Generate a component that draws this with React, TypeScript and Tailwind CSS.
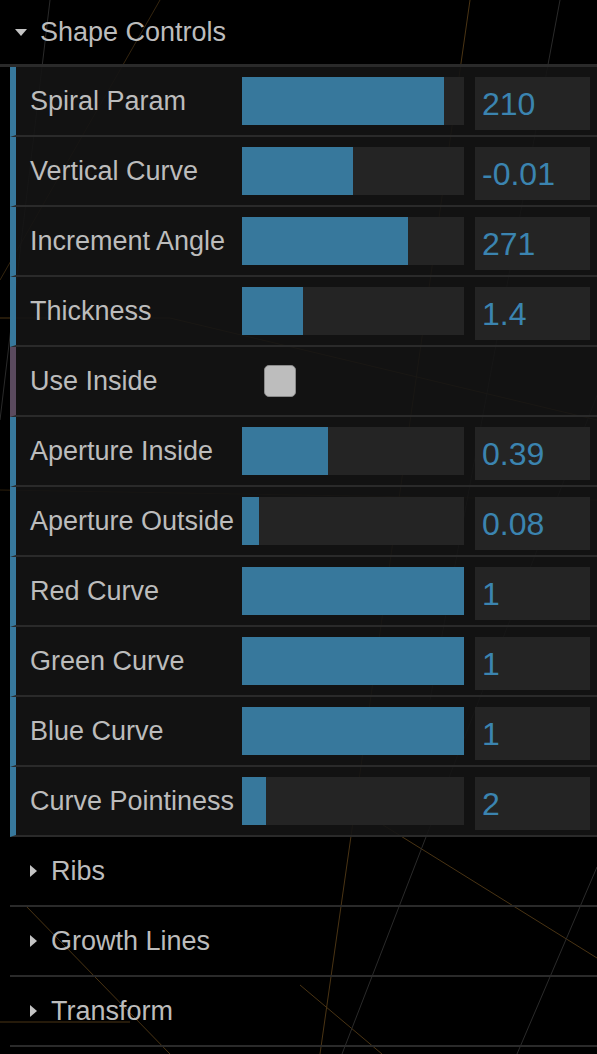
import React from 'react';

type Ctrl =
  | { kind: 'number'; label: string; value: string; fill: number }
  | { kind: 'bool'; label: string };

const controls: Ctrl[] = [
  { kind: 'number', label: 'Spiral Param', value: '210', fill: 202 },
  { kind: 'number', label: 'Vertical Curve', value: '-0.01', fill: 111 },
  { kind: 'number', label: 'Increment Angle', value: '271', fill: 166 },
  { kind: 'number', label: 'Thickness', value: '1.4', fill: 61 },
  { kind: 'bool', label: 'Use Inside' },
  { kind: 'number', label: 'Aperture Inside', value: '0.39', fill: 86 },
  { kind: 'number', label: 'Aperture Outside', value: '0.08', fill: 17 },
  { kind: 'number', label: 'Red Curve', value: '1', fill: 222 },
  { kind: 'number', label: 'Green Curve', value: '1', fill: 222 },
  { kind: 'number', label: 'Blue Curve', value: '1', fill: 222 },
  { kind: 'number', label: 'Curve Pointiness', value: '2', fill: 24 },
];

const folders = ['Ribs', 'Growth Lines', 'Transform'];

// faint lines of the canvas behind the panel
const Backdrop: React.FC = () => (
  <svg className="absolute inset-0" width="597" height="1054" viewBox="0 0 597 1054">
    <g stroke="#4a3414" strokeWidth="1" fill="none">
      <polyline points="0,318 170,318 597,420" />
      <line x1="375" y1="820" x2="597" y2="958" />
      <line x1="300" y1="985" x2="382" y2="1054" />
      <line x1="470" y1="0" x2="320" y2="1054" />
      <line x1="25" y1="905" x2="170" y2="1054" />
      <polyline points="0,1022 130,1022" />
      <line x1="0" y1="490" x2="597" y2="500" opacity="0.6" />
      <line x1="160" y1="0" x2="0" y2="280" opacity="0.7" />
    </g>
    <g stroke="#2a2a2a" strokeWidth="1" fill="none">
      <line x1="750" y1="0" x2="342" y2="1054" />
      <line x1="597" y1="867" x2="517" y2="1054" />
      <line x1="50" y1="0" x2="0" y2="420" />
      <line x1="560" y1="0" x2="430" y2="700" />
    </g>
  </svg>
);

const App: React.FC = () => {
  return (
    <div className="relative w-[597px] h-[1054px] overflow-hidden bg-black font-[family-name:'Liberation_Sans',Arial,sans-serif] text-[27px] text-[#bcbcbc]">
      <Backdrop />

      <div className="relative">
        {/* Folder title */}
        <div className="flex h-[67px] items-center border-b-[3px] border-[#2a2a2a] pl-[15px]">
          <svg width="12" height="7" viewBox="0 0 12 7" className="mr-[13px] mt-[1px]">
            <polygon points="0,0 12,0 6,7" fill="#c4c4c4" />
          </svg>
          <span className="leading-none">Shape Controls</span>
        </div>

        {controls.map((c) => (
          <div
            key={c.label}
            className={`ml-[10px] flex h-[70px] border-b-2 border-b-[#2a2a2a] border-l-[6px] bg-[#141414]/90 ${
              c.kind === 'bool' ? 'border-l-[#5a4a5e]' : 'border-l-[#37789c]'
            }`}
          >
            <div className="flex w-[226px] shrink-0 items-center whitespace-nowrap pl-[14px] leading-none">
              {c.label}
            </div>
            {c.kind === 'number' ? (
              <div className="flex gap-[11px] pt-[10px]">
                <div className="h-[48px] w-[222px] bg-[#242424]">
                  <div className="h-full bg-[#37789c]" style={{ width: c.fill }} />
                </div>
                <div className="flex h-[53px] w-[115px] items-center bg-[#242424] pl-[7px] text-[32px] text-[#3b84b0] leading-none">
                  {c.value}
                </div>
              </div>
            ) : (
              <div className="flex items-center pl-[22px]">
                <div className="h-[32px] w-[32px] rounded-[5px] border border-[#8a8a8a] bg-[#bdbdbd]" />
              </div>
            )}
          </div>
        ))}

        {folders.map((f) => (
          <div key={f} className="ml-[10px] flex h-[70px] items-center border-b-2 border-[#2a2a2a] pl-[20px]">
            <svg width="7" height="12" viewBox="0 0 7 12" className="mr-[14px]">
              <polygon points="0,0 7,6 0,12" fill="#c4c4c4" />
            </svg>
            <span className="leading-none">{f}</span>
          </div>
        ))}
      </div>
    </div>
  );
};

export default App;
